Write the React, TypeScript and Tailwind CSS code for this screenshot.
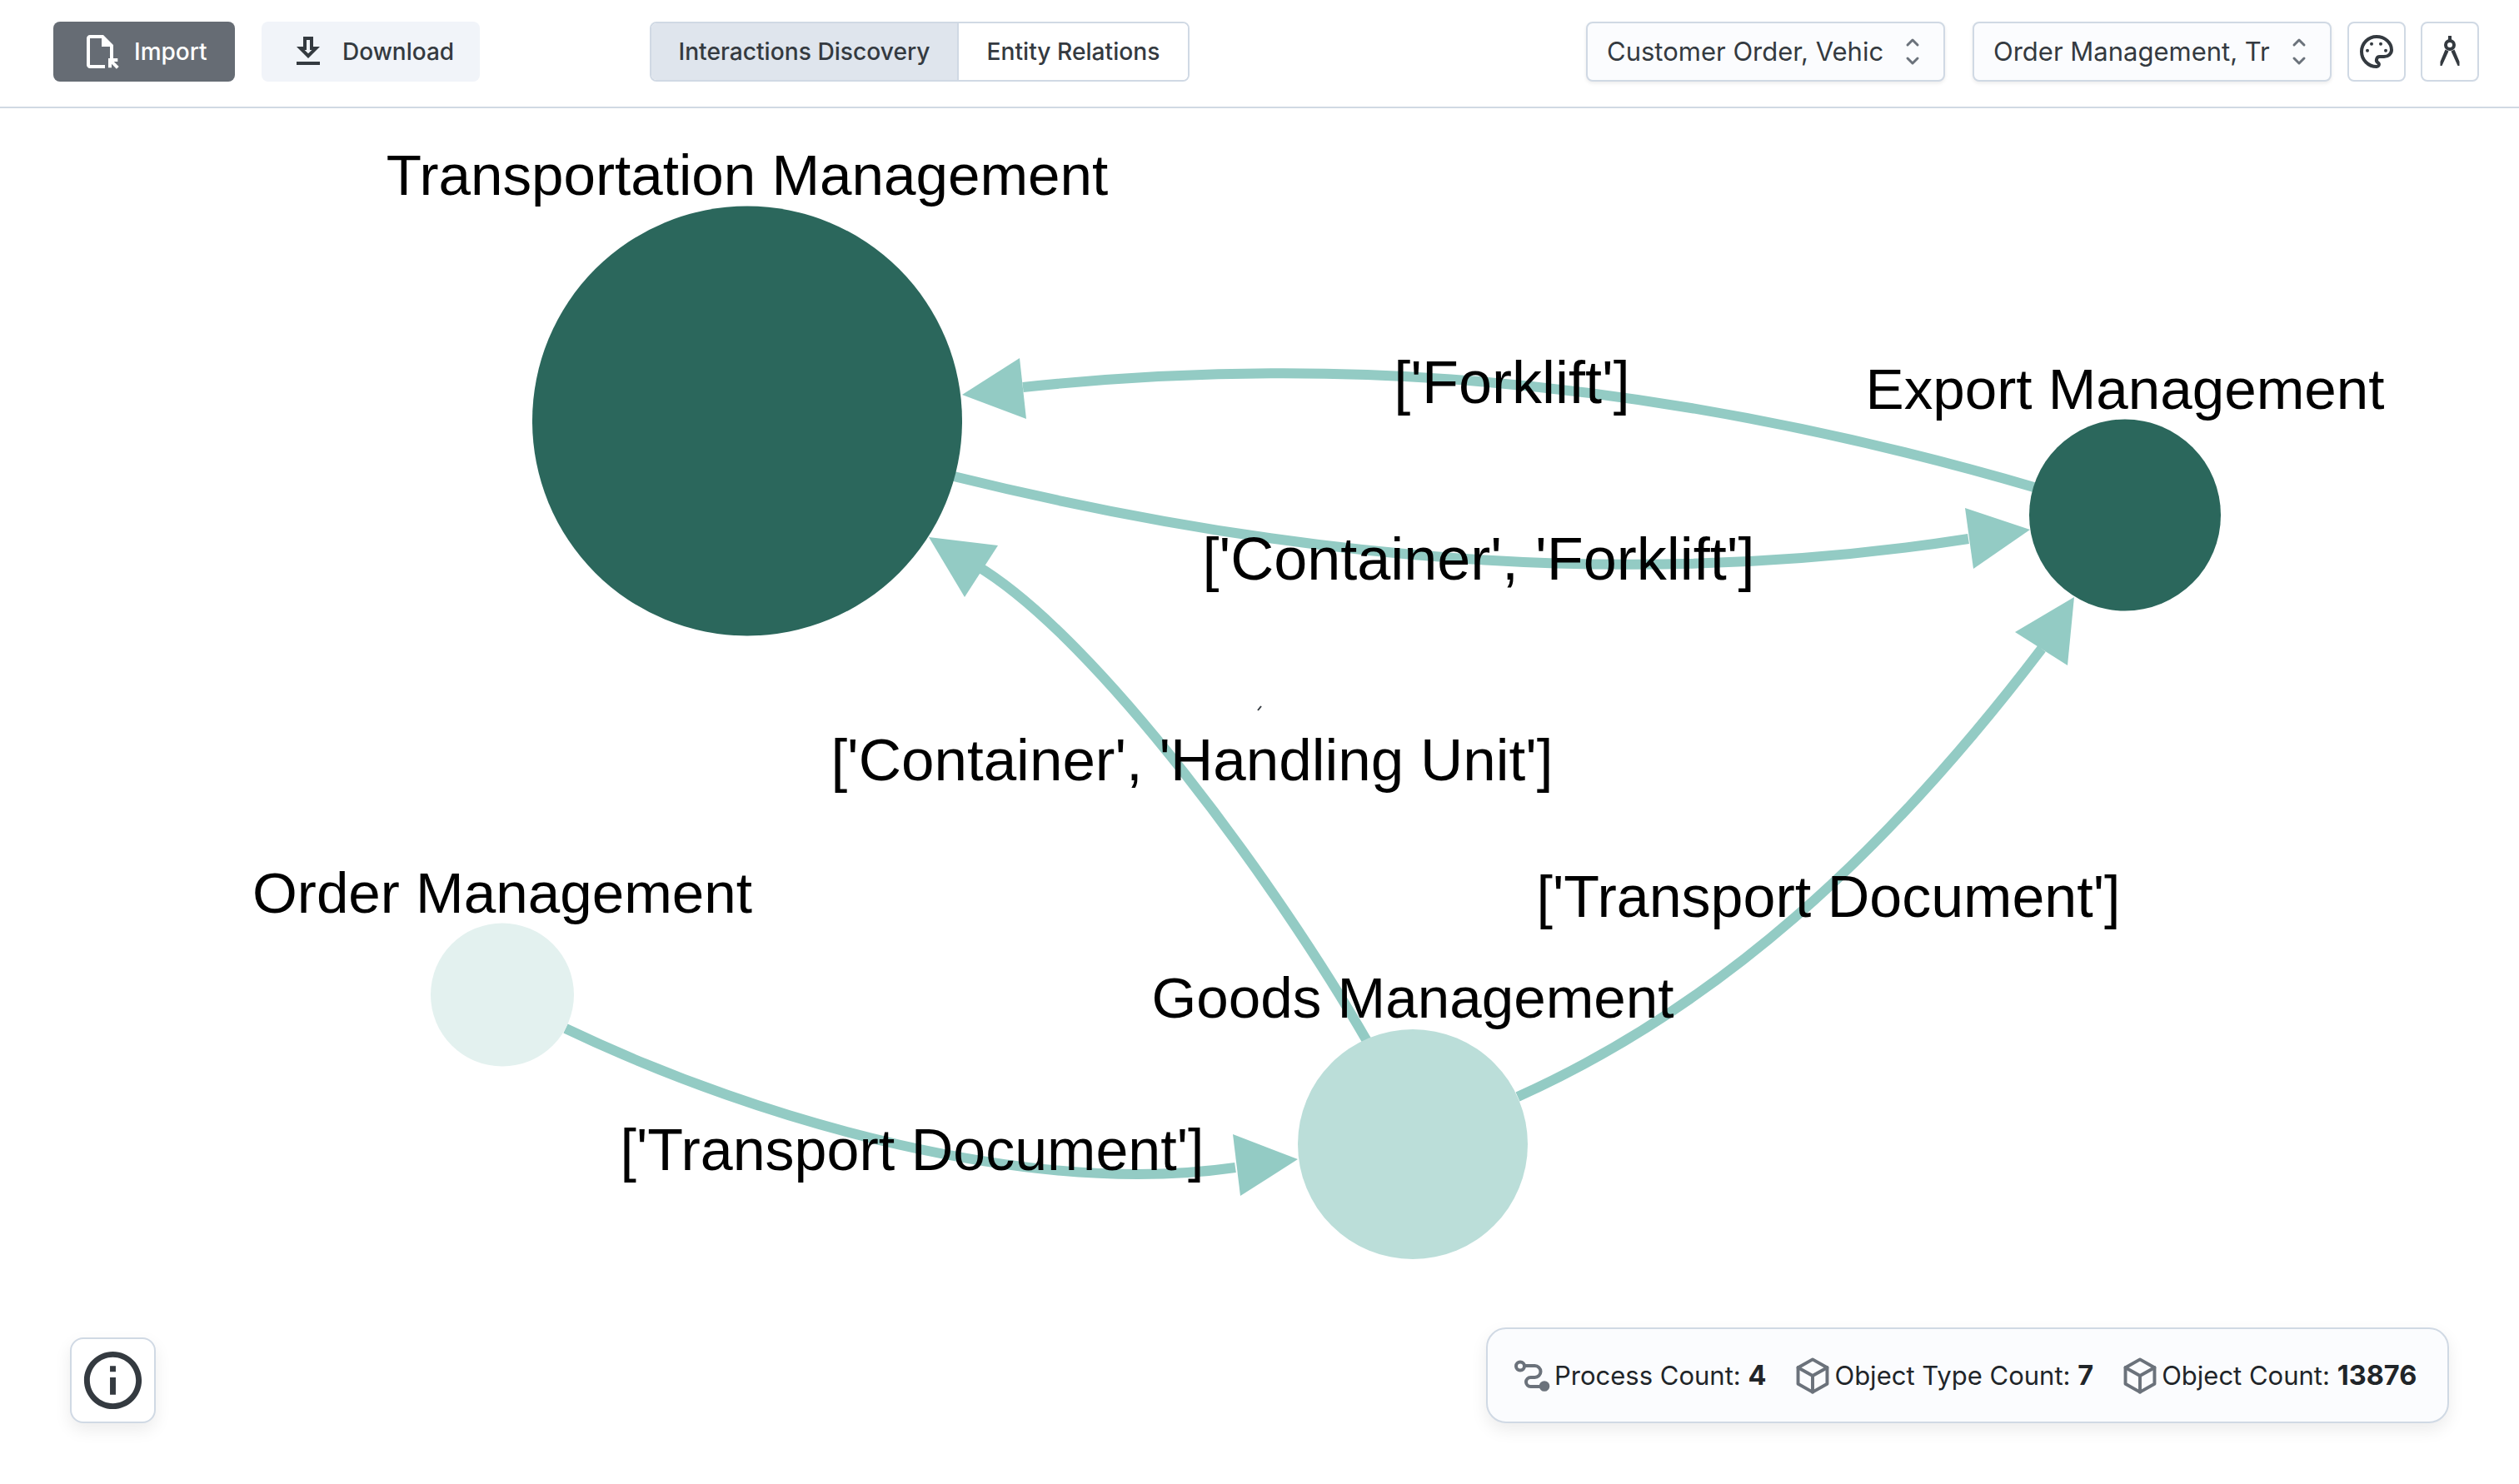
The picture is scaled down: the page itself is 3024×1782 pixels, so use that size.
const Stat = ({ icon, label, value }: { icon: React.ReactNode; label: string; value: string }) => (
  <div className="flex items-center gap-[2px]">
    {icon}
    <span className="text-[31px] leading-[48px] text-[#212529] whitespace-nowrap">
      {label}: <span className="font-bold text-[32.5px]">{value}</span>
    </span>
  </div>
);

const Cube = () => (
  <svg viewBox="1 1 22 22" className="w-12 h-12 shrink-0" fill="none" stroke="#6b727b" strokeWidth={1.8} strokeLinejoin="round" strokeLinecap="round">
    <path d="M12 3l8 4.5v9l-8 4.5l-8-4.5v-9z" />
    <path d="M12 12l8-4.5M12 12v9M12 12L4 7.5" />
  </svg>
);

const ProcessIcon = () => (
  <svg viewBox="16 7.5 48 48" className="w-12 h-12 shrink-0" fill="none" stroke="#6b727b" strokeWidth={4}>
    <circle cx={25} cy={20} r={5} />
    <path d="M30 19.5H42.5A7 7 0 0 1 42.5 33.5H37.5A5.5 5.5 0 0 0 37.5 44.5H50" strokeLinecap="round" />
    <circle cx={54} cy={44} r={6.3} fill="#6b727b" stroke="none" />
  </svg>
);

const Selector = () => (
  <svg viewBox="0 0 24 24" className="w-12 h-12 shrink-0" fill="none" stroke="#6b727b" strokeWidth={1.5} strokeLinecap="round" strokeLinejoin="round">
    <path d="M9 8l3-3l3 3M15 16l-3 3l-3-3" />
  </svg>
);

const SelectBox = ({ text, className }: { text: string; className: string }) => (
  <div className={"flex items-center w-[431px] h-[72px] rounded-lg border-2 border-[#d0d9e4] bg-[#fbfcfe] shadow-[0_2px_4px_rgba(0,0,0,0.08)] pl-[23px] pr-[13px] " + className}>
    <div className="flex-1 min-w-0 overflow-hidden whitespace-nowrap text-[31px] text-[#343a40]">{text}</div>
    <div className="ml-[11px]">
      <Selector />
    </div>
  </div>
);

const edgeColor = "#93cbc4";

export default function App() {
  return (
    <div className="flex flex-col w-[3024px] h-[1782px] bg-white overflow-hidden font-['Inter',sans-serif]">
      <header className="flex items-center h-[130px] shrink-0 border-b-2 border-[#d0d9e3] pl-16 pr-[48px] pb-[4px]">
        <div className="flex items-center gap-8">
          <button className="flex items-center h-[72px] w-[218px] rounded-lg bg-[#666c74] pl-8 gap-[17px] text-white text-[28px] font-medium">
            <svg viewBox="0 0 24 24" className="w-12 h-12 shrink-0" fill="currentColor">
              <path d="M15 22H6c-1.1 0-2-.9-2-2V4c0-1.1.9-2 2-2h8l6 6v8h-2V9h-5V4H6v16h9v2zm4-.34v-2.24l2.95 2.95 1.41-1.41L20.41 18h2.24v-2H17v5.66h2z" />
            </svg>
            Import
          </button>
          <button className="flex items-center h-[72px] w-[262px] rounded-lg bg-[#f1f4f9] pl-8 gap-[17px] text-[#343a40] text-[28px] font-medium">
            <svg viewBox="0 0 24 24" className="w-12 h-12 shrink-0" fill="currentColor">
              <path d="M19 9h-4V3H9v6H5l7 7 7-7zm-8 2V5h2v6h1.17L12 13.17 9.83 11H11zm-6 7h14v2H5z" />
            </svg>
            Download
          </button>
        </div>
        <div className="flex ml-[204px] h-[72px] w-[648px] rounded-lg border-2 border-[#d0d9e4] overflow-hidden text-[28.2px] font-medium text-[#343a40]">
          <div className="flex items-center justify-center w-[369px] bg-[#dfe5ed] border-r-2 border-[#d0d9e4]">Interactions Discovery</div>
          <div className="flex items-center justify-center flex-1 bg-white">Entity Relations</div>
        </div>
        <div className="flex items-center ml-auto">
          <SelectBox text="Customer Order, Vehicle" className="" />
          <SelectBox text="Order Management, Transportation" className="ml-[33px]" />
          <button className="flex items-center justify-center ml-[19px] w-[70px] h-[72px] rounded-lg border-2 border-[#d0d9e4] bg-white">
            <svg viewBox="0 0 24 24" className="w-12 h-12" fill="none" stroke="#343a40" strokeWidth={2} strokeLinecap="round" strokeLinejoin="round">
              <path d="M12 21a9 9 0 0 1 0-18c4.97 0 9 3.582 9 8c0 1.06-.474 2.078-1.318 2.828c-.844 .75-1.989 1.172-3.182 1.172h-2.5a2 2 0 0 0-1 3.75a1.3 1.3 0 0 1-1 2.25" />
              <g fill="#343a40" stroke="none">
                <circle cx={9} cy={7.4} r={1} />
                <circle cx={14.5} cy={7.4} r={1} />
                <circle cx={6.5} cy={11.4} r={1} />
                <circle cx={17.5} cy={11.4} r={1} />
              </g>
            </svg>
          </button>
          <button className="flex items-center justify-center ml-[18px] w-[70px] h-[72px] rounded-lg border-2 border-[#d0d9e4] bg-white">
            <svg viewBox="0 0 48 48" className="w-12 h-12" fill="#343a40" stroke="none">
              <rect x={22} y={5} width={4} height={7} />
              <circle cx={24} cy={16} r={5} fill="none" stroke="#343a40" strokeWidth={4} />
              <path d="M18.5 21.5L22.5 23.5L14.5 41H12.5V36z" />
              <path d="M29.5 21.5L25.5 23.5L33.5 41H35.5V36z" />
            </svg>
          </button>
        </div>
      </header>

      <main className="relative flex-1">
        <svg viewBox="0 130 3024 1652" className="block w-full h-full font-['Liberation_Sans',sans-serif]">
          <g fill="none" stroke={edgeColor} strokeWidth={12}>
            <path d="M2445 586C1910 429 1510 435 1228 465" />
            <path d="M1145 572C1551 672 1957 710 2363 647" />
            <path d="M1641 1250C1536 1067 1318 766 1172 679" />
            <path d="M1822 1317C2060 1210 2260 1030 2451 779" />
            <path d="M679 1235C920 1350 1240 1437 1483 1402" />
          </g>
          <g fill={edgeColor}>
            <polygon points="1155,474 1224,430 1232,503" />
            <polygon points="2437,636 2359,610 2369,683" />
            <polygon points="1115,645 1198,655 1158,717" />
            <polygon points="2490,717 2419,759 2482,799" />
            <polygon points="1558,1392 1480,1362 1489,1436" />
          </g>
          <circle cx={897} cy={505.5} r={258} fill="#2b675c" />
          <circle cx={2551} cy={618.5} r={115} fill="#2b675c" />
          <circle cx={1696} cy={1374} r={138} fill="#bbded9" />
          <circle cx={603} cy={1194.5} r={86} fill="#e3f1ef" />
          <line x1={1510} y1={853} x2={1514} y2={848} stroke="#343a40" strokeWidth={2} />
          <g fill="#000" textAnchor="middle">
            <text x={897} y={234} className="text-[69.2px]">Transportation Management</text>
            <text x={2551} y={491} className="text-[69.2px]">Export Management</text>
            <text x={603} y={1096} className="text-[69.2px]">Order Management</text>
            <text x={1696} y={1222} className="text-[69.2px]">Goods Management</text>
            <text x={1815} y={484} className="text-[72px]">['Forklift']</text>
            <text x={1775} y={696} className="text-[72px]">['Container', 'Forklift']</text>
            <text x={1431} y={937} className="text-[71px]">['Container', 'Handling Unit']</text>
            <text x={2195} y={1101} className="text-[70px]">['Transport Document']</text>
            <text x={1095} y={1405} className="text-[70px]">['Transport Document']</text>
          </g>
        </svg>

        <button className="absolute left-[84px] bottom-[73px] flex items-center justify-center w-[103px] h-[103px] rounded-2xl border-2 border-[#d0d9e4] bg-white shadow-[0_8px_20px_rgba(0,0,0,0.08)]">
          <svg viewBox="0 0 24 24" className="w-[83px] h-[83px]" fill="#343a40">
            <path d="M11 7h2v2h-2zm0 4h2v6h-2zm1-9C6.48 2 2 6.48 2 12s4.48 10 10 10 10-4.48 10-10S17.52 2 12 2zm0 18c-4.41 0-8-3.59-8-8s3.59-8 8-8 8 3.59 8 8-3.59 8-8 8z" />
          </svg>
        </button>

        <div className="absolute right-[84px] bottom-[73px] flex items-center gap-8 h-[115px] w-[1156px] rounded-3xl border-2 border-[#d0d9e4] bg-[#fbfcfe] pl-[30px] shadow-[0_8px_20px_rgba(0,0,0,0.08)]">
          <Stat icon={<ProcessIcon />} label="Process Count" value="4" />
          <Stat icon={<Cube />} label="Object Type Count" value="7" />
          <Stat icon={<Cube />} label="Object Count" value="13876" />
        </div>
      </main>
    </div>
  );
}
